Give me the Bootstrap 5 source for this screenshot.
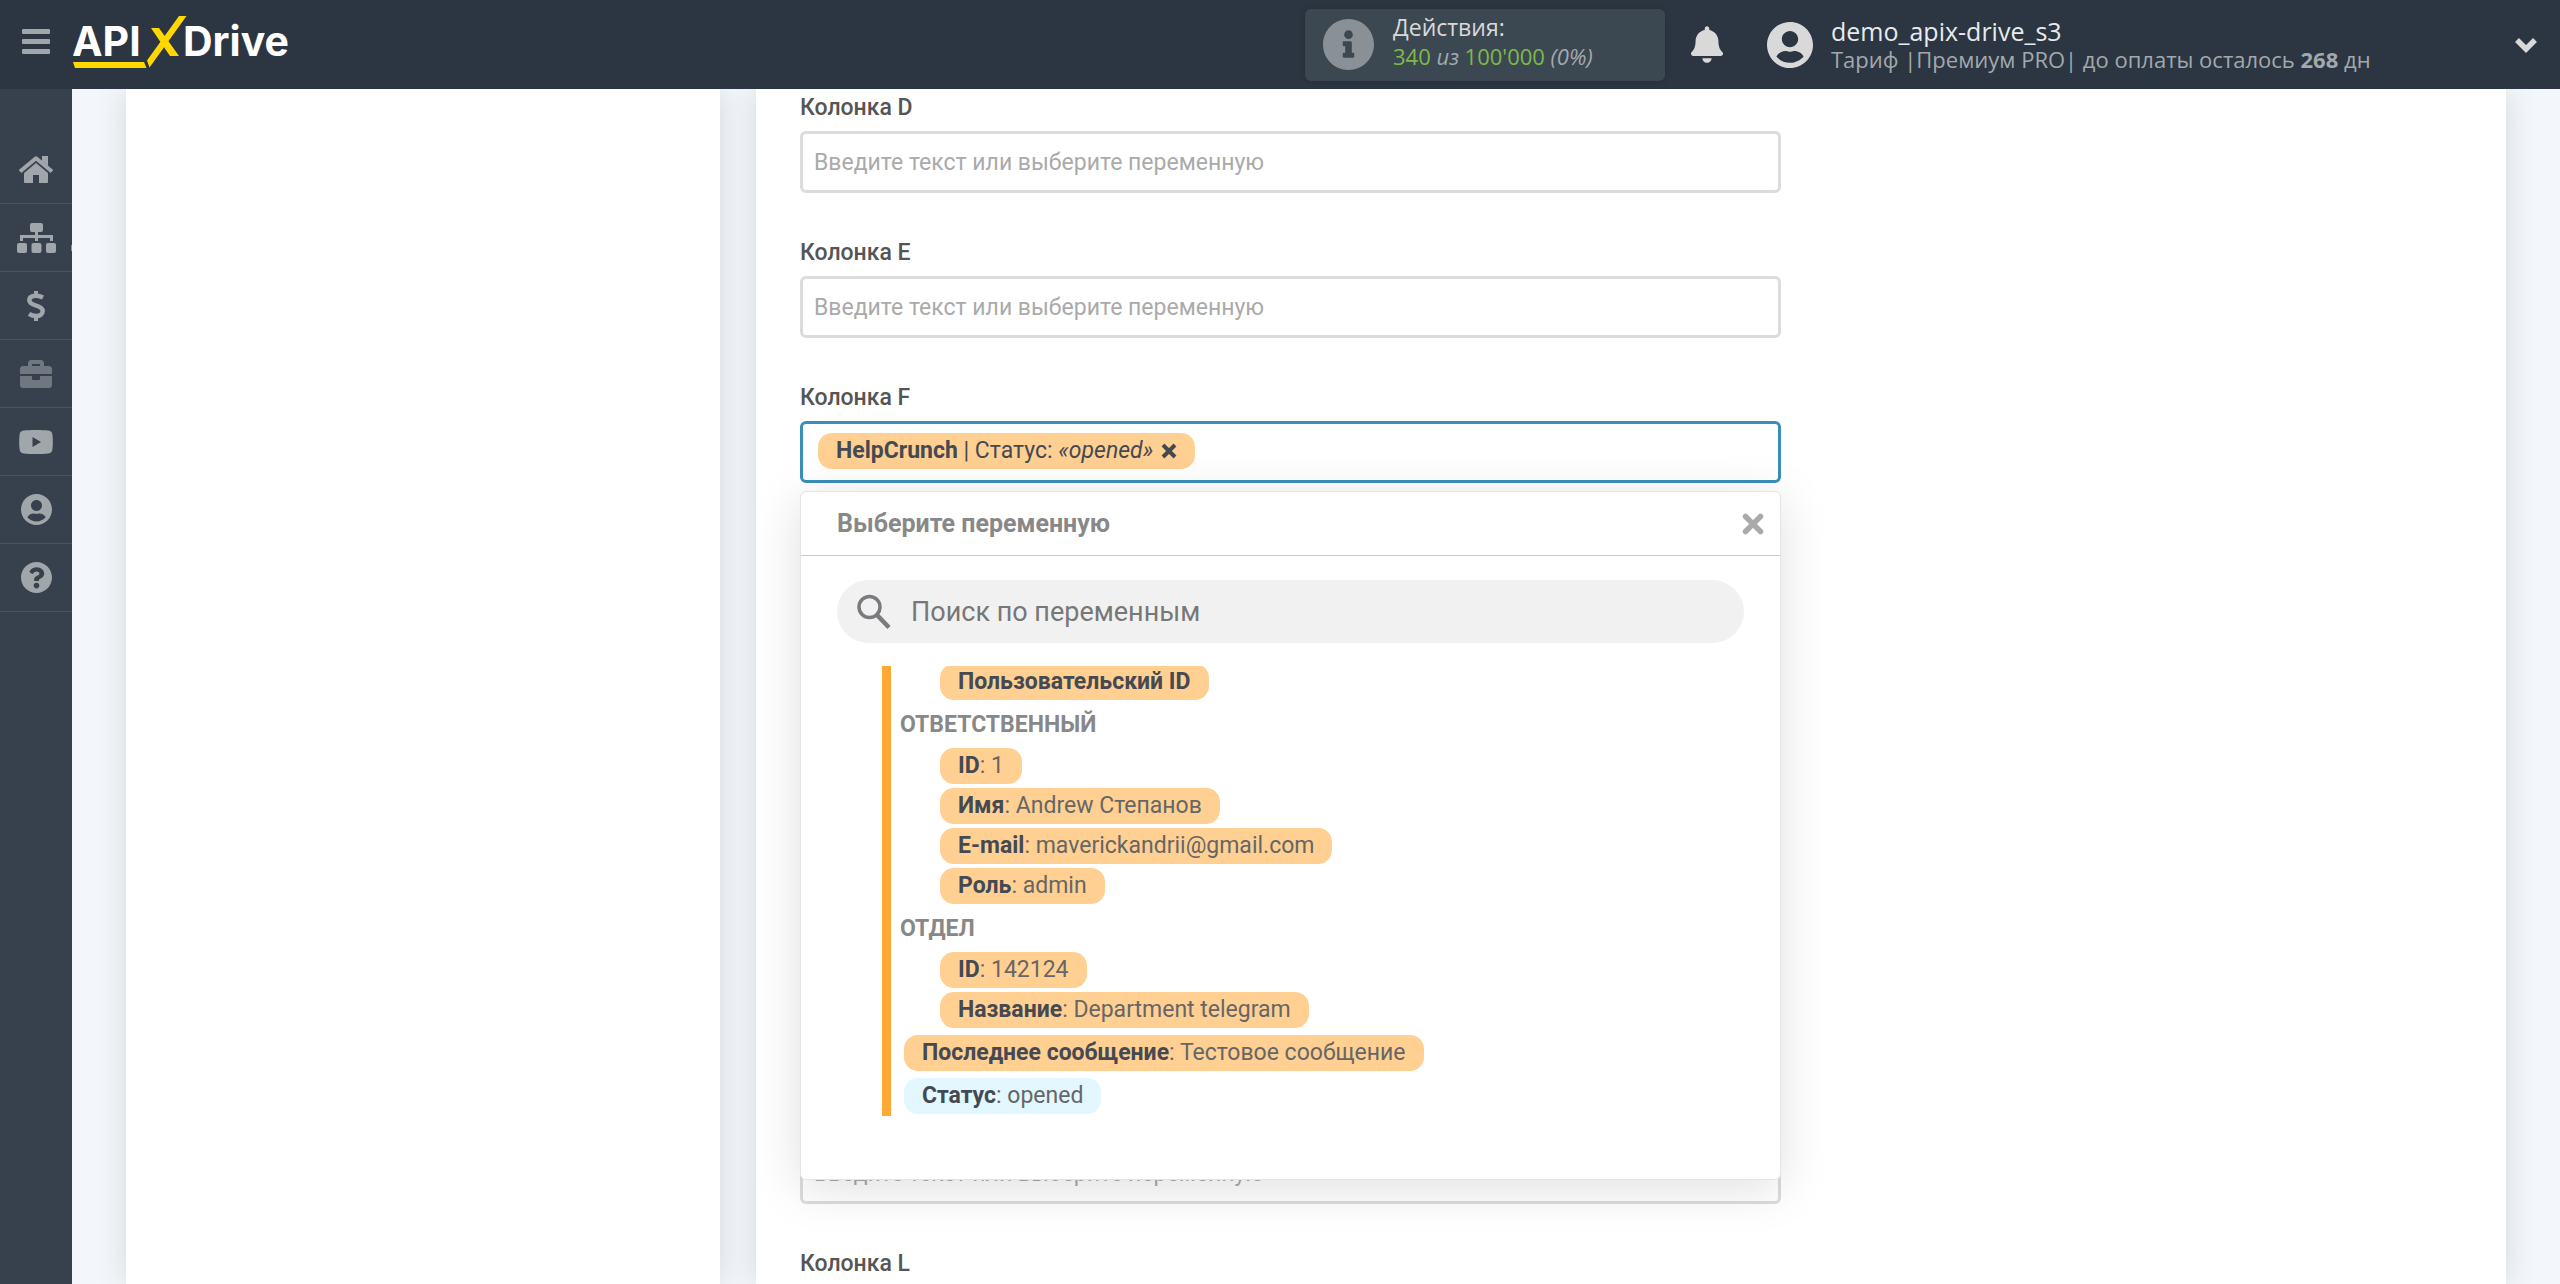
<!DOCTYPE html>
<html lang="ru">
<head>
<meta charset="utf-8">
<meta name="viewport" content="width=device-width, initial-scale=1">
<title>ApiX-Drive</title>
<link href="https://cdn.jsdelivr.net/npm/bootstrap@5.3.0/dist/css/bootstrap.min.css" rel="stylesheet">
<style>
  body { font-family: Roboto, "Liberation Sans", sans-serif; font-size: 23px; line-height: 26px; color: #555; background: #f3f6fb; }
  svg { display: block; fill: currentColor; }

  /* top bar */
  .topbar { height: 89px; background: #2b3642; color: #d9d9d9; font-family: "Open Sans", "Noto Sans", sans-serif; z-index: 10; }
  .bar-left { padding-bottom: 5px; }
  .burger { padding: 0 0 0 22px; color: #a1a6ab; }
  .brand { margin-left: 23px; }
  .brand-word { font: 700 41px Inter, sans-serif; }
  .bar-right { width: 1255px; }
  .actions-box { width: 360px; height: 72px; padding-left: 18px; border-radius: 6px; background: #3c4851; box-shadow: 0 0 6px rgba(0,0,0,.15); line-height: 29px; gap: 19px; }
  .actions-box svg { color: #899096; }
  .actions-text { padding-bottom: 5px; }
  .sub-line { font-size: 22px; color: #a3a8ad; }
  .num-green { color: #7eb94b; }
  .bell-btn { margin-left: 26px; color: #d9d9d9; }
  .user-link { margin-left: 44px; gap: 18px; color: #a3a8ad; line-height: 28px; }
  .user-link svg { color: #d9d9d9; }
  .user-name { font-size: 25px; color: #e8eaec; }
  .toggle-btn { margin-right: 22px; color: #d9d9d9; }

  /* side menu */
  .sidebar { width: 72px; padding-top: 47px; background: #36414d; }
  .sidebar a { height: 68px; border-bottom: 1px solid #495662; color: #a1a6ab; }
  .sidebar a.dimmed { color: #6f7881; }
  .tree-mark { top: 41px; right: 0; width: 1px; height: 6px; background: #8d949b; }

  /* panels */
  .page { padding: 0 54px; gap: 36px; }
  .panel { background: #fff; box-shadow: 0 0 30px rgba(0,0,0,.13); }
  .panel-side { width: calc(25% - 1px); }
  .panel-form { padding: 6px 44px 0; }
  .fields { width: 59%; gap: 47px; }
  .fields-more { margin-top: -1px; }
  .field-label { font-weight: 500; color: #555; margin-bottom: 10px; }
  .form-control.field-box { height: 62px; padding: 0 11px; border: 3px solid #dcdcdc; border-radius: 6px; font-size: 23px; background: #fff; }
  .field-box::placeholder { color: #aaa; opacity: 1; }
  .form-control.field-active { border-color: #398fb8; padding: 0 15px 2px; }
  .field-active input { outline: 0; min-width: 0; }

  .tag-chip { height: 36px; padding: 0 18px; border: 0; border-radius: 14px; background: #ffd092; color: #666; line-height: 34px; white-space: nowrap; text-align: left; }
  .tag-chip b { font-weight: 700; color: #454952; }
  .tag-used { background: #e2f7ff; }
  .tag-picked { color: #454952; }
  .tag-picked button { color: #454952; }

  /* variable picker */
  .picker { top: 70px; left: 0; right: 0; height: 689px; background: #fff; border: 1px solid #e4e4e4; border-radius: 6px; box-shadow: 0 8px 50px rgba(0,0,0,.13); z-index: 5; }
  .picker-head { height: 64px; padding: 0 15px 0 36px; border-bottom: 1px solid #c9c9c9; font-size: 25px; font-weight: 700; color: #888; }
  .picker-head button { color: #aaa; }
  .search-pill { height: 63px; margin: 24px 36px 0; padding: 0 20px; border-radius: 32px; background: #f1f1f1; gap: 20px; color: #7a7a7f; }
  .search-pill input { font-size: 27px; color: #555; outline: 0; }
  .search-pill input::placeholder { color: #777; opacity: 1; }
  .var-scroll { height: 450px; margin: 23px 36px 0 81px; overflow: hidden; border-left: 9px solid #ffa834; }
  .var-list { margin-top: -2px; padding-left: 13px; gap: 7px; }
  .var-group { padding-left: 36px; gap: 4px; }
  .var-title { height: 36px; margin: 0 0 5px -4px; line-height: 36px; font-weight: 700; color: #888; }
</style>
<script src="https://cdn.jsdelivr.net/npm/bootstrap@5.3.0/dist/js/bootstrap.bundle.min.js"></script>
</head>
<body>
<div class="d-flex flex-column vh-100 overflow-hidden">
  <header class="topbar d-flex align-items-center justify-content-between flex-shrink-0 position-relative">
    <div class="bar-left d-flex align-items-center">
      <button type="button" class="burger btn border-0" aria-label="Меню">
        <svg width="28" height="26" viewBox="0 0 28 26"><rect width="28" height="5" rx="1"/><rect y="10" width="28" height="5" rx="1"/><rect y="20" width="28" height="5" rx="1"/></svg>
      </button>
      <a href="#" class="brand" aria-label="ApiX-Drive">
        <svg width="222" height="56" viewBox="73 14 222 56">
          <g class="brand-word"><text x="72" y="56" fill="#fff">API</text><text x="183" y="56" fill="#fff">Drive</text></g>
          <path fill="#ffd800" d="M151 28h8l20 28h-9zM179 16h7.500l-37 51.500-2.500-7z"/>
          <path fill="#ffd800" d="M73 62h71l2.500 6H75z"/>
        </svg>
      </a>
    </div>
    <div class="bar-right d-flex align-items-center">
      <div class="actions-box d-flex align-items-center flex-shrink-0">
        <svg width="51" height="51" viewBox="8 8 496 496"><path d="M256 8C119.043 8 8 119.083 8 256c0 136.997 111.043 248 248 248s248-111.003 248-248C504 119.083 392.957 8 256 8zm0 110c23.196 0 42 18.804 42 42s-18.804 42-42 42-42-18.804-42-42 18.804-42 42-42zm56 254c0 6.627-5.373 12-12 12h-88c-6.627 0-12-5.373-12-12v-24c0-6.627 5.373-12 12-12h12v-64h-12c-6.627 0-12-5.373-12-12v-24c0-6.627 5.373-12 12-12h64c6.627 0 12 5.373 12 12v100h12c6.627 0 12 5.373 12 12v24z"/></svg>
        <div class="actions-text">
          <div>Действия:</div>
          <div class="sub-line"><span class="num-green">340</span> <i>из</i> <span class="num-green">100'000</span> <i>(0%)</i></div>
        </div>
      </div>
      <button type="button" class="bell-btn btn border-0 p-0" aria-label="Уведомления">
        <svg width="32" height="37" viewBox="0 0 448 512"><path d="M224 512c35.32 0 63.97-28.65 63.97-64H160.03c0 35.35 28.65 64 63.97 64zm215.390-149.710c-19.320-20.760-55.470-51.990-55.470-154.290 0-77.700-54.480-139.900-127.940-155.160V32c0-17.670-14.320-32-31.980-32s-31.980 14.330-31.980 32v20.840C118.560 68.100 64.080 130.300 64.080 208c0 102.300-36.150 133.530-55.470 154.290-6 6.450-8.660 14.160-8.610 21.710.110 16.400 12.980 32 32.100 32h383.800c19.120 0 32-15.600 32.100-32 .050-7.550-2.610-15.270-8.610-21.710z"/></svg>
      </button>
      <a href="#" class="user-link d-flex align-items-center text-decoration-none">
        <svg width="46" height="46" viewBox="0 8 496 496"><path d="M248 8C111 8 0 119 0 256s111 248 248 248 248-111 248-248S385 8 248 8zm0 96c48.600 0 88 39.400 88 88s-39.400 88-88 88-88-39.400-88-88 39.400-88 88-88zm0 344c-58.700 0-111.300-26.600-146.500-68.200 18.800-35.400 55.600-59.800 98.500-59.800 2.400 0 4.800.4 7.100 1.100 13 4.200 26.600 6.900 40.900 6.900 14.300 0 28-2.700 40.900-6.900 2.300-.7 4.700-1.100 7.100-1.100 42.900 0 79.700 24.400 98.500 59.800C359.300 421.400 306.700 448 248 448z"/></svg>
        <span>
          <span class="user-name d-block">demo_apix-drive_s3</span>
          <span class="sub-line d-block">Тариф |Премиум PRO| до оплаты осталось <b>268</b> дн</span>
        </span>
      </a>
      <button type="button" class="toggle-btn btn border-0 p-0 ms-auto" aria-label="Развернуть">
        <svg width="24" height="16" viewBox="0 0 24 16"><path d="M3 3l9 9 9-9" fill="none" stroke="currentColor" stroke-width="5.500"/></svg>
      </button>
    </div>
  </header>

  <div class="d-flex flex-grow-1 overflow-hidden">
    <nav class="sidebar d-flex flex-column flex-shrink-0">
      <a href="#" class="d-flex align-items-center justify-content-center" aria-label="Главная">
        <svg width="36" height="28" viewBox="0 0 36 28"><path d="M24 0h6v10l-6-5z"/><path d="M2 15.500L18 2.300l16 13.200" fill="none" stroke="currentColor" stroke-width="4" stroke-linejoin="round"/><path d="M18 7l12 10v9a1 1 0 0 1-1 1h-8v-8h-6v8H7a1 1 0 0 1-1-1v-9z"/></svg>
      </a>
      <a href="#" class="d-flex align-items-center justify-content-center position-relative" aria-label="Связи">
        <svg width="39" height="30" viewBox="0 0 39 30"><rect x="13" width="13" height="9" rx="2"/><path d="M19.500 8v10M4.500 18v-4.500h30V18" fill="none" stroke="currentColor" stroke-width="3"/><rect y="20" width="10" height="10" rx="2"/><rect x="14.500" y="20" width="10" height="10" rx="2"/><rect x="29" y="20" width="10" height="10" rx="2"/></svg>
        <span class="tree-mark position-absolute"></span>
      </a>
      <a href="#" class="d-flex align-items-center justify-content-center" aria-label="Оплата">
        <svg width="18" height="30" viewBox="0 0 18 30"><path d="M16 6.500C13 5 10.500 4.500 8 4.800 4.500 5.200 2.300 7 2.300 9.300c0 2.700 2 3.700 6.200 5 4.600 1.300 7.200 2.500 7.200 5.700 0 3-2.700 5-6.400 5-2.800 0-5-.6-7.300-2.200" fill="none" stroke="currentColor" stroke-width="4.500"/><path d="M7 0h4v5H7zM7 25h4v5H7z"/></svg>
      </a>
      <a href="#" class="dimmed d-flex align-items-center justify-content-center" aria-label="Кейсы">
        <svg width="32" height="28" viewBox="0 32 512 448"><path d="M320 336c0 8.840-7.160 16-16 16h-96c-8.840 0-16-7.160-16-16v-48H0v144c0 25.600 22.400 48 48 48h416c25.600 0 48-22.400 48-48V288H320v48zm144-208h-80V80c0-25.600-22.400-48-48-48H176c-25.600 0-48 22.400-48 48v48H48c-25.600 0-48 22.400-48 48v80h512v-80c0-25.600-22.400-48-48-48zm-144 0H192V96h128v32z"/></svg>
      </a>
      <a href="#" class="d-flex align-items-center justify-content-center" aria-label="Видео">
        <svg width="34" height="24" viewBox="0 0 34 24"><path fill-rule="evenodd" d="M4.500.6C12 -.2 22 -.2 29.500.6c2.300.3 3.600 1.500 3.900 4 .6 5 .6 10 0 15-.3 2.300-1.600 3.500-3.900 3.800-7.500.8-17.500.8-25 0C2.200 23.100.9 21.900.6 19.600c-.6-5-.6-10 0-15C.9 2.100 2.200.9 4.500.6zM13.500 7v10l8.500-5z"/></svg>
      </a>
      <a href="#" class="d-flex align-items-center justify-content-center" aria-label="Профиль">
        <svg width="31" height="31" viewBox="0 8 496 496"><path d="M248 8C111 8 0 119 0 256s111 248 248 248 248-111 248-248S385 8 248 8zm0 96c48.600 0 88 39.400 88 88s-39.400 88-88 88-88-39.400-88-88 39.400-88 88-88zm0 344c-58.700 0-111.300-26.600-146.500-68.200 18.800-35.400 55.600-59.800 98.500-59.800 2.400 0 4.800.4 7.100 1.100 13 4.200 26.600 6.900 40.900 6.900 14.300 0 28-2.700 40.900-6.900 2.300-.7 4.700-1.100 7.100-1.100 42.900 0 79.700 24.400 98.500 59.800C359.300 421.400 306.700 448 248 448z"/></svg>
      </a>
      <a href="#" class="d-flex align-items-center justify-content-center" aria-label="Помощь">
        <svg width="31" height="31" viewBox="8 8 496 496"><path d="M504 256c0 136.997-111.043 248-248 248S8 392.997 8 256C8 119.083 119.043 8 256 8s248 111.083 248 248zM262.655 90c-54.497 0-89.255 22.957-116.549 63.758-3.536 5.286-2.353 12.415 2.715 16.258l34.699 26.310c5.205 3.947 12.621 3.008 16.665-2.122 17.864-22.658 30.113-35.797 57.303-35.797 20.429 0 45.698 13.148 45.698 32.958 0 14.976-12.363 22.667-32.534 33.976C247.128 238.528 216 254.941 216 296v4c0 6.627 5.373 12 12 12h56c6.627 0 12-5.373 12-12v-1.333c0-28.462 83.186-29.647 83.186-106.667 0-58.002-60.165-102-116.531-102zM256 338c-25.365 0-46 20.635-46 46 0 25.364 20.635 46 46 46s46-20.636 46-46c0-25.365-20.635-46-46-46z"/></svg>
      </a>
    </nav>

    <main class="page d-flex flex-grow-1 overflow-hidden">
      <section class="panel panel-side flex-shrink-0"></section>
      <section class="panel panel-form flex-grow-1">
        <form class="fields d-flex flex-column">
          <div><label class="field-label d-block" for="colD">Колонка D</label><input id="colD" class="form-control field-box" type="text" placeholder="Введите текст или выберите переменную"></div>
          <div><label class="field-label d-block" for="colE">Колонка E</label><input id="colE" class="form-control field-box" type="text" placeholder="Введите текст или выберите переменную"></div>
          <div>
            <label class="field-label d-block" for="colF">Колонка F</label>
            <div class="position-relative">
              <div class="form-control field-box field-active d-flex align-items-center">
                <span class="tag-chip tag-picked d-flex align-items-center"><span><b>HelpCrunch</b> | Статус: <i>«opened»</i></span>
                  <button type="button" class="btn border-0 p-0 ms-2" aria-label="Удалить"><svg width="16" height="16" viewBox="0 0 16 16"><path d="M2 2l12 12M14 2L2 14" fill="none" stroke="currentColor" stroke-width="4"/></svg></button></span>
                <input id="colF" type="text" class="border-0 bg-transparent flex-grow-1">
              </div>
              <div class="picker position-absolute">
                <div class="picker-head d-flex align-items-center justify-content-between">
                  <span>Выберите переменную</span>
                  <button type="button" class="btn border-0 p-0" aria-label="Закрыть"><svg width="24" height="24" viewBox="0 0 24 24"><path d="M4.500 4.500l15 15M19.500 4.500l-15 15" fill="none" stroke="currentColor" stroke-width="5.500" stroke-linecap="round"/></svg></button>
                </div>
                <label class="search-pill d-flex align-items-center">
                  <svg width="34" height="36" viewBox="0 0 34 36"><circle cx="12.500" cy="13" r="10.500" fill="none" stroke="currentColor" stroke-width="3.500"/><path d="M20 21l12 12.500" fill="none" stroke="currentColor" stroke-width="4.500"/></svg>
                  <input type="text" class="border-0 bg-transparent flex-grow-1 p-0" placeholder="Поиск по переменным" aria-label="Поиск по переменным">
                </label>
                <div class="var-scroll">
                  <div class="var-list d-flex flex-column align-items-start">
                    <div class="var-group d-flex flex-column align-items-start">
                      <button type="button" class="tag-chip"><b>Пользовательский ID</b></button>
                    </div>
                    <div>
                      <div class="var-title">ОТВЕТСТВЕННЫЙ</div>
                      <div class="var-group d-flex flex-column align-items-start">
                        <button type="button" class="tag-chip"><b>ID</b>: 1</button>
                        <button type="button" class="tag-chip"><b>Имя</b>: Andrew Степанов</button>
                        <button type="button" class="tag-chip"><b>E-mail</b>: maverickandrii@gmail.com</button>
                        <button type="button" class="tag-chip"><b>Роль</b>: admin</button>
                      </div>
                    </div>
                    <div>
                      <div class="var-title">ОТДЕЛ</div>
                      <div class="var-group d-flex flex-column align-items-start">
                        <button type="button" class="tag-chip"><b>ID</b>: 142124</button>
                        <button type="button" class="tag-chip"><b>Название</b>: Department telegram</button>
                      </div>
                    </div>
                    <button type="button" class="tag-chip"><b>Последнее сообщение</b>: Тестовое сообщение</button>
                    <button type="button" class="tag-chip tag-used"><b>Статус</b>: opened</button>
                  </div>
                </div>
              </div>
            </div>
          </div>
          <div class="fields-more invisible"><label class="field-label d-block" for="colG">Колонка G</label><input id="colG" class="form-control field-box" type="text"></div>
          <div class="fields-more invisible"><label class="field-label d-block" for="colH">Колонка H</label><input id="colH" class="form-control field-box" type="text"></div>
          <div class="fields-more invisible"><label class="field-label d-block" for="colI">Колонка I</label><input id="colI" class="form-control field-box" type="text"></div>
          <div class="fields-more invisible"><label class="field-label d-block" for="colJ">Колонка J</label><input id="colJ" class="form-control field-box" type="text"></div>
          <div><label class="field-label d-block invisible" for="colK">Колонка K</label><input id="colK" class="form-control field-box" type="text" placeholder="Введите текст или выберите переменную"></div>
          <div><label class="field-label d-block" for="colL">Колонка L</label><input id="colL" class="form-control field-box" type="text" placeholder="Введите текст или выберите переменную"></div>
        </form>
      </section>
    </main>
  </div>
</div>
</body>
</html>
